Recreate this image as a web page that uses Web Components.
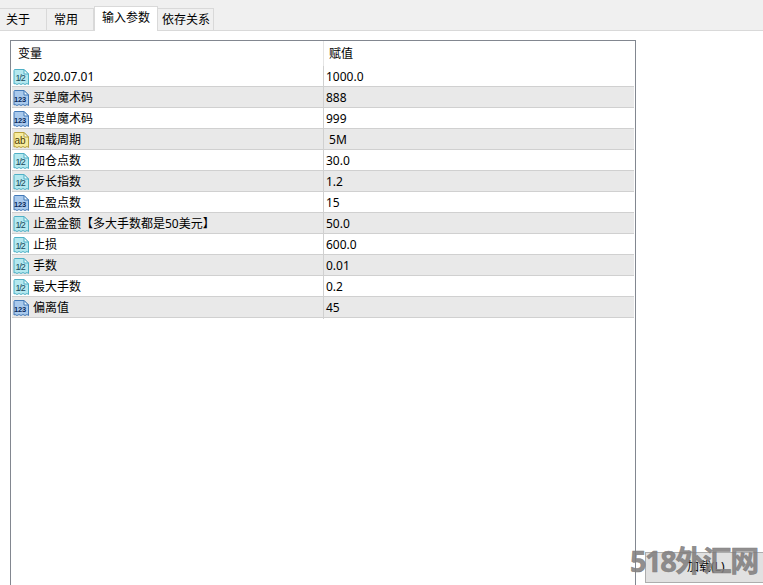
<!DOCTYPE html>
<html lang="zh">
<head>
<meta charset="utf-8">
<title>输入参数</title>
<style>
  html, body { margin: 0; height: 100%; background: #fff; }
  body { font: 12px "Noto Sans", "Noto Sans CJK SC", sans-serif; color: #000; overflow: hidden; }
</style>
</head>
<body>
<app-dialog>
  <tab-bar>
    <tab-item>关于</tab-item>
    <tab-item>常用</tab-item>
    <tab-item active>输入参数</tab-item>
    <tab-item narrow>依存关系</tab-item>
  </tab-bar>
  <param-table>
    <param-row type="d" name="2020.07.01" value="1000.0"></param-row>
    <param-row type="i" name="买单魔术码" value="888" alt></param-row>
    <param-row type="i" name="卖单魔术码" value="999"></param-row>
    <param-row type="s" name="加载周期" value="&nbsp;5M" alt></param-row>
    <param-row type="d" name="加仓点数" value="30.0"></param-row>
    <param-row type="d" name="步长指数" value="1.2" alt></param-row>
    <param-row type="i" name="止盈点数" value="15"></param-row>
    <param-row type="d" name="止盈金额【多大手数都是50美元】" value="50.0" alt></param-row>
    <param-row type="d" name="止损" value="600.0"></param-row>
    <param-row type="d" name="手数" value="0.01" alt></param-row>
    <param-row type="d" name="最大手数" value="0.2"></param-row>
    <param-row type="i" name="偏离值" value="45" alt></param-row>
  </param-table>
  <load-button slot="action">加载(L)</load-button>
</app-dialog>
<script>
class AppDialog extends HTMLElement {
  constructor() {
    super();
    this.attachShadow({ mode: "open" });
    this.shadowRoot.innerHTML = `
      <style>
        :host { display: flex; flex-direction: column; height: 585px; position: relative; overflow: hidden; }
        #body { flex: 1; min-height: 0; display: flex; padding: 9px 0 0 10px; }
        #side { flex: 1; display: flex; justify-content: flex-end; align-items: flex-end; padding-bottom: 2px; }
        #mark {
          position: absolute; left: 630px; top: 542px;
          font: bold 29px/38px "Noto Sans", "Noto Sans CJK SC", sans-serif;
          letter-spacing: -1.5px; white-space: nowrap; color: rgba(130, 127, 127, 0.9);
          -webkit-text-stroke: 0.6px rgba(130, 127, 127, 0.9);
        }
      </style>
      <slot name="tabs"></slot>
      <slot></slot>
      <div id="body">
        <slot name="table"></slot>
        <div id="side"><slot name="action"></slot></div>
      </div>
      <div id="mark">518外汇网</div>
    `;
    this.querySelector("tab-bar").slot = "tabs";
    this.querySelector("param-table").slot = "table";
  }
}

class TabBar extends HTMLElement {
  constructor() {
    super();
    this.attachShadow({ mode: "open" });
    this.shadowRoot.innerHTML = `
      <style>
        :host {
          display: flex; align-items: flex-end; height: 31px; box-sizing: border-box;
          background: #f0f0f0; border-bottom: 1px solid #d9d9d9;
        }
      </style>
      <slot></slot>
    `;
  }
}

class TabItem extends HTMLElement {
  constructor() {
    super();
    this.attachShadow({ mode: "open" });
    this.shadowRoot.innerHTML = `
      <style>
        :host {
          display: block; box-sizing: border-box; width: 47px; height: 22px;
          padding-left: 7px; line-height: 21px; background: #f0f0f0; white-space: nowrap;
          border: 1px solid #d9d9d9; border-bottom: 0; border-left: 0;
        }
        :host(:first-child) { padding-left: 6px; }
        :host([active]) {
          width: 64px; height: 25px; margin-bottom: -1px; padding-left: 7px; line-height: 22px;
          background: #fff; border-left: 1px solid #d9d9d9; z-index: 1;
        }
        :host([narrow]) { width: 56px; padding-left: 4px; }
      </style>
      <slot></slot>
    `;
  }
}

class ParamTable extends HTMLElement {
  constructor() {
    super();
    this.attachShadow({ mode: "open" });
    this.shadowRoot.innerHTML = `
      <style>
        :host {
          display: block; box-sizing: border-box; width: 626px; height: 100%;
          border: 1px solid #828790; border-bottom: 0; background: #fff; padding: 0 1px;
        }
        #head { display: grid; grid-template-columns: 311px 1fr; height: 25px; line-height: 26px; }
        #head div { padding-left: 6px; }
        #head div + div { border-left: 1px solid #e5e5e5; padding-left: 5px; }
      </style>
      <div id="head"><div>变量</div><div>赋值</div></div>
      <slot></slot>
    `;
  }
}

class ParamRow extends HTMLElement {
  constructor() {
    super();
    this.attachShadow({ mode: "open" });
    const name = this.getAttribute("name");
    const value = this.getAttribute("value");
    const type = this.getAttribute("type");
    this.shadowRoot.innerHTML = `
      <style>
        :host {
          display: grid; grid-template-columns: 311px 1fr; height: 21px; box-sizing: border-box;
          border-bottom: 1px solid #d0d0d0; line-height: 22px; background: #fff; white-space: nowrap;
        }
        :host([alt]) { background: #e9e9e9; }
        #name { display: flex; align-items: center; gap: 4px; padding-left: 1px; }
        #value { border-left: 1px solid #d0d0d0; padding-left: 2px; }
      </style>
      <div id="name"><type-icon type="${type}"></type-icon><span>${name}</span></div>
      <div id="value">${value}</div>
    `;
  }
}

const ICON_STYLES = {
  d: { fill: "#b4e8ef", edge: "#4fb0c6", ink: "#17495c", label: "1/2", size: 9, tight: -1.2, weight: "normal" },
  i: { fill: "#a9c9ec", edge: "#4379b8", ink: "#0b2a5c", label: "123", size: 7.5, tight: -0.2, weight: "bold" },
  s: { fill: "#f7eb9c", edge: "#b8a13c", ink: "#4a3c08", label: "ab", size: 10, tight: 0, weight: "normal" }
};

class TypeIcon extends HTMLElement {
  constructor() {
    super();
    this.attachShadow({ mode: "open" });
    const s = ICON_STYLES[this.getAttribute("type")];
    this.shadowRoot.innerHTML = `
      <style>
        :host { display: block; width: 16px; height: 17px; flex: none; }
        svg { display: block; }
      </style>
      <svg width="16" height="17" viewBox="0 0 16 17">
        <path d="M1.5.5h9.5l4.5 4.5v10.5l-1.5-1-2 1-2-1-2 1-2-1-2 1-2-1-1 .5V1.5z" fill="${s.fill}" stroke="${s.edge}"/>
        <path d="M11 .5v4.5h4.5z" fill="#eef9fb" stroke="${s.edge}"/>
        <text x="7" y="11.5" text-anchor="middle" font-family="Liberation Sans, sans-serif"
          font-weight="${s.weight}" font-size="${s.size}" letter-spacing="${s.tight}" fill="${s.ink}">${s.label}</text>
      </svg>
    `;
  }
}

class LoadButton extends HTMLElement {
  constructor() {
    super();
    this.attachShadow({ mode: "open" });
    this.shadowRoot.innerHTML = `
      <style>
        :host {
          display: block; box-sizing: border-box; width: 118px; height: 31px; line-height: 28px;
          background: #e1e1e1; border: 1px solid #adadad; border-right: 0; padding-left: 41px;
        }
      </style>
      <slot></slot>
    `;
  }
}

customElements.define("app-dialog", AppDialog);
customElements.define("tab-bar", TabBar);
customElements.define("tab-item", TabItem);
customElements.define("param-table", ParamTable);
customElements.define("param-row", ParamRow);
customElements.define("type-icon", TypeIcon);
customElements.define("load-button", LoadButton);
</script>
</body>
</html>
